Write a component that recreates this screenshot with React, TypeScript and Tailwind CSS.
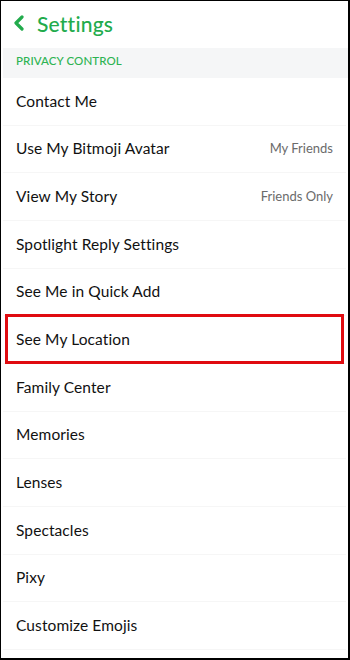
const rows: { label: string; value?: string; highlight?: boolean }[] = [
  { label: 'Contact Me' },
  { label: 'Use My Bitmoji Avatar', value: 'My Friends' },
  { label: 'View My Story', value: 'Friends Only' },
  { label: 'Spotlight Reply Settings' },
  { label: 'See Me in Quick Add' },
  { label: 'See My Location', highlight: true },
  { label: 'Family Center' },
  { label: 'Memories' },
  { label: 'Lenses' },
  { label: 'Spectacles' },
  { label: 'Pixy' },
  { label: 'Customize Emojis' },
];

export default function App() {
  return (
    <div
      className="w-[350px] h-[660px] overflow-hidden bg-white border-t border-l border-r-2 border-b-2 border-black flex flex-col"
      style={{ fontFamily: 'Lato, "Noto Sans", sans-serif' }}
    >
      {/* header */}
      <div className="h-[47px] shrink-0 flex items-center pl-[12px]">
        <svg width="12" height="16" viewBox="0 0 12 16" className="mr-[12px] mt-[-3px]">
          <polyline
            points="9,2 3,8 9,14"
            fill="none"
            stroke="#22ab4c"
            strokeWidth="3.2"
            strokeLinecap="round"
            strokeLinejoin="round"
          />
        </svg>
        <span className="text-[21px] font-medium text-[#22ab4c] tracking-[0.2px] mt-[-2px]">Settings</span>
      </div>

      {/* section header */}
      <div className="h-[30px] shrink-0 bg-[#f5f6f7] ml-[2px] flex items-center pl-[13px]">
        <span className="text-[11.5px] font-medium text-[#2db352] tracking-[0.1px] mt-[-4px]">PRIVACY CONTROL</span>
      </div>

      {/* rows */}
      <div className="flex flex-col">
        {rows.map((r) => (
          <div key={r.label} className="relative h-[47.67px] shrink-0 flex items-center justify-between pl-[13px] pr-[13px] border-b border-[#f6f6f6] mx-[2px]">
            <span className="text-[15.5px] text-[#111111] tracking-[0.1px]">{r.label}</span>
            {r.value && <span className="text-[13px] text-[#6b6b6b]">{r.value}</span>}
            {r.highlight && (
              <div className="absolute left-[2px] right-[2px] top-[-2px] bottom-[-1px] border-[3px] border-[#e00b10]" />
            )}
          </div>
        ))}
      </div>
    </div>
  );
}
